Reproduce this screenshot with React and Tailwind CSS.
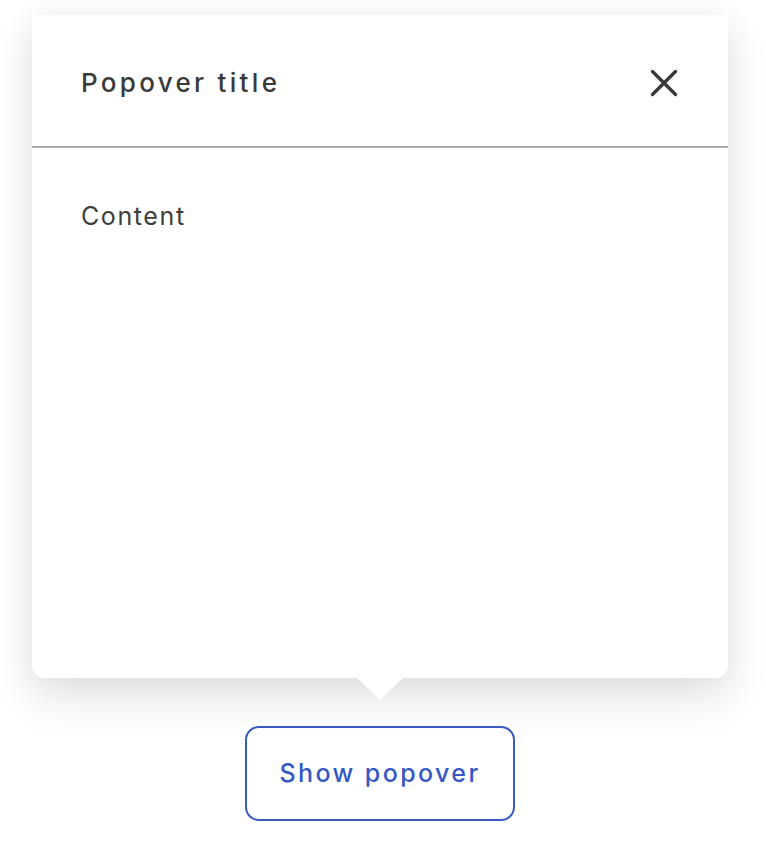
export default function App() {
  return (
    <div className="min-h-[850px] w-[766px] bg-white pt-[15px]" style={{ fontFamily: 'Inter, "Open Sans", sans-serif' }}>
      <div className="ml-[32px] flex w-[696px] flex-col items-center">
        <div className="relative w-full rounded-b-[12px] bg-white shadow-[0_20px_45px_rgba(0,0,0,0.11),0_0_30px_rgba(0,0,0,0.05)]">
          <div className="flex h-[131px] items-center justify-between pl-[49px] pr-[50px] pt-[4px]">
            <h2 className="text-[26px] font-medium tracking-[3.3px] text-[#3a3a3a]">Popover title</h2>
            <button className="flex h-[28px] w-[28px] items-center justify-center text-[#3a3a3a]">
              <svg width="28" height="28" viewBox="0 0 28 28" fill="none" stroke="currentColor" strokeWidth="3.4" strokeLinecap="round">
                <path d="M2.5 2.5 L25.5 25.5 M25.5 2.5 L2.5 25.5" />
              </svg>
            </button>
          </div>
          <div className="h-[2px] bg-[#acacac]" />
          <div className="h-[530px] pl-[49px] pt-[52px]">
            <p className="text-[25px] leading-[32px] tracking-[1.6px] text-[#3d3d3d]">Content</p>
          </div>
          <div className="absolute left-1/2 top-full h-0 w-0 -translate-x-1/2 border-x-[23px] border-t-[22px] border-x-transparent border-t-white" />
        </div>
        <button className="mt-[48px] flex h-[95px] w-[270px] items-center justify-center rounded-[14px] border-2 border-[#3b5bc4] bg-white text-[25px] font-medium tracking-[2.4px] text-[#3558c5]">
          Show popover
        </button>
      </div>
    </div>
  );
}
